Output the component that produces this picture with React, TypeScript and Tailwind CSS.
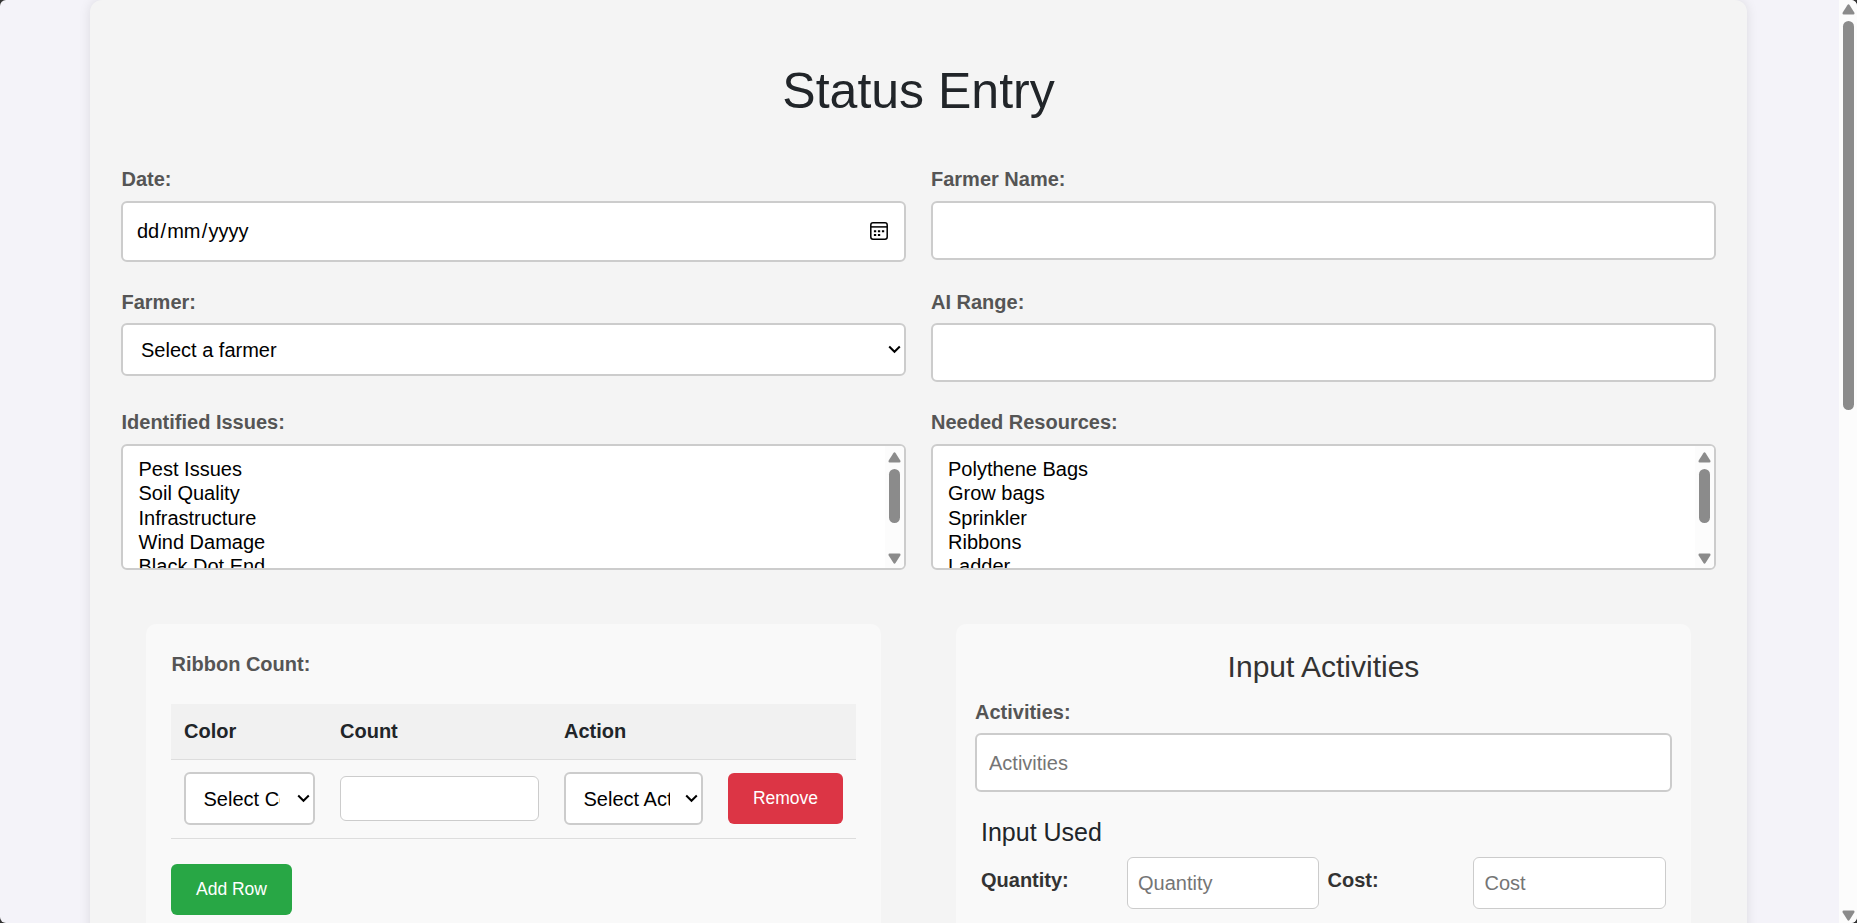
import type { ReactNode } from "react";

const field = "border-2 border-[#ccc] rounded-md bg-white text-[20px] text-black";

function Label({ children, inset = false }: { children: ReactNode; inset?: boolean }) {
  return (
    <label className={`${inset ? "pl-[0.5px]" : "pl-0"} block h-[30px] text-[20px] leading-[30px] font-bold text-[#555]`}>
      {children}
    </label>
  );
}

function Chevron() {
  return (
    <svg className="shrink-0" width="13" height="9" viewBox="0 0 13 9" fill="none" stroke="#000" strokeWidth="2">
      <path d="M1.2 1.5 6.5 6.8 11.8 1.5" />
    </svg>
  );
}

function Arrow({ down = false }: { down?: boolean }) {
  return (
    <svg className={down ? "shrink-0 rotate-180" : "shrink-0"} width="13" height="11" viewBox="0 0 13 11" fill="#8b8b8b">
      <path d="M5.3 1.2Q6.5-.6 7.7 1.2L12.3 8.6Q13 10.4 11.3 10.5H1.7Q0 10.4.7 8.6Z" />
    </svg>
  );
}

function ListBox({ items, inset = false }: { items: string[]; inset?: boolean }) {
  return (
    <div className={`${field} mt-[2px] flex h-[126px] overflow-hidden`}>
      <ul className={`${inset ? "pl-[15.5px]" : "pl-[15px]"} flex-1 pt-[12px]`}>
        {items.map((item) => (
          <li key={item} className="h-[24.3px] leading-[23px]">{item}</li>
        ))}
      </ul>
      <div className="flex w-[19px] flex-col items-center bg-[#fcfcfc] pt-[6px] pb-[4px]">
        <Arrow />
        <div className="mt-[6px] h-[54px] w-[11px] rounded-full bg-[#8b8b8b]" />
        <div className="flex-1" />
        <Arrow down />
      </div>
    </div>
  );
}

function MiniSelect({ text, textWidth }: { text: string; textWidth: string }) {
  return (
    <div className={`${field} flex h-[53px] items-center justify-between pr-[3px] pl-[17.5px]`}>
      <span className={`${textWidth} overflow-hidden whitespace-nowrap leading-[30px]`}>{text}</span>
      <Chevron />
    </div>
  );
}

export default function App() {
  return (
    <div className="bg-[#333]">
      <div className="flex h-[923px] w-[1857px] overflow-hidden rounded-[6px] bg-[#f4f3f9] font-['Liberation_Sans',Arial,sans-serif]">
        <div className="w-[1839px] shrink-0 pl-[90px]">
          <main className="h-[1000px] w-[1657px] rounded-xl bg-[#f4f4f4] px-[31px] pt-[61px] shadow-[0_0_12px_rgba(0,0,0,0.1)]">
            <h1 className="h-[60px] text-center text-[50px] leading-[60px] text-[#212529]">Status Entry</h1>

            <div className="mt-[43px] grid grid-cols-2 gap-x-[25px]">
              <div className="h-[123px]">
                <Label inset>Date:</Label>
                <div className={`${field} mt-[7px] flex h-[61px] items-center justify-between pr-4 pb-[2px] pl-[14px]`}>
                  <span className="flex gap-[1.2px]">
                    <span>dd</span>
                    <span>/</span>
                    <span>mm</span>
                    <span>/</span>
                    <span>yyyy</span>
                  </span>
                  <svg width="18" height="18" viewBox="0 0 18 18" fill="none" stroke="#000">
                    <rect x=".8" y=".8" width="16.4" height="16.4" rx="2.2" strokeWidth="1.5" />
                    <path d="M1 4.9h16" strokeWidth="1.5" />
                    <path d="M3.9 9.2h2.3M7.9 9.2h2.3M11.9 9.2h2.3M3.9 13h2.3M7.9 13h2.3" strokeWidth="2.1" />
                  </svg>
                </div>
              </div>
              <div>
                <Label>Farmer Name:</Label>
                <input className={`${field} mt-[7px] block h-[59px] w-full`} />
              </div>
              <div className="h-[120px]">
                <Label inset>Farmer:</Label>
                <div className={`${field} mt-[6px] flex h-[53px] items-center justify-between pr-[3px] pl-[18px]`}>
                  <span>Select a farmer</span>
                  <Chevron />
                </div>
              </div>
              <div>
                <Label>AI Range:</Label>
                <input className={`${field} mt-[6px] block h-[59px] w-full`} />
              </div>
              <div>
                <Label inset>Identified Issues:</Label>
                <div className="pt-[5px]">
                  <ListBox inset items={["Pest Issues", "Soil Quality", "Infrastructure", "Wind Damage", "Black Dot End"]} />
                </div>
              </div>
              <div>
                <Label>Needed Resources:</Label>
                <div className="pt-[5px]">
                  <ListBox items={["Polythene Bags", "Grow bags", "Sprinkler", "Ribbons", "Ladder"]} />
                </div>
              </div>
            </div>

            <div className="mt-[54px] grid grid-cols-2 gap-x-[75px] px-[25px]">
              <section className="h-[360px] rounded-[10px] bg-[#f9f9f9] px-[25px] pt-[25px]">
                <Label inset>Ribbon Count:</Label>
                <table className="mt-[25px] w-[685px] table-fixed border-collapse text-left text-[20px] text-[#212529]">
                  <colgroup>
                    <col className="w-[157px]" />
                    <col className="w-[224px]" />
                    <col className="w-[163px]" />
                    <col className="w-[141px]" />
                  </colgroup>
                  <thead>
                    <tr className="h-[55px] border-b border-[#ddd] bg-[#f1f1f1]">
                      <th className="px-[13px]">Color</th>
                      <th className="px-[12px]">Count</th>
                      <th className="px-[12px]">Action</th>
                      <th />
                    </tr>
                  </thead>
                  <tbody>
                    <tr className="h-[79px] border-b border-[#ddd]">
                      <td className="p-0 px-[13px]"><MiniSelect text="Select Color" textWidth="w-[76px]" /></td>
                      <td className="p-0 px-[12px]"><input className="block h-[45px] w-[199px] rounded-md border border-[#ccc] bg-white" /></td>
                      <td className="p-0 px-[12px]"><MiniSelect text="Select Action" textWidth="w-[86px]" /></td>
                      <td className="p-0 px-[13px]">
                        <button className="block h-[51px] w-full rounded-md bg-[#dc3545] text-[17.5px] text-white">Remove</button>
                      </td>
                    </tr>
                  </tbody>
                </table>
                <button className="mt-[25px] block h-[51px] w-[121px] rounded-md bg-[#28a745] text-[17.5px] text-white">Add Row</button>
              </section>

              <section className="h-[360px] rounded-[10px] bg-[#f9f9f9] px-[19px] pt-[25px]">
                <h2 className="h-[36px] text-center text-[30px] leading-[36px] text-[#333]">Input Activities</h2>
                <div className="mt-[12px]">
                  <Label>Activities:</Label>
                </div>
                <input placeholder="Activities" className={`${field} mt-[6px] block h-[59px] w-full px-3 pt-[2px] placeholder:text-[#757575]`} />
                <h3 className="mt-[25px] pl-[6px] text-[25px] leading-[30px] text-[#212529]">Input Used</h3>
                <div className="mt-[10px] flex pr-[6px] pl-[6px] text-[20px] text-[#333]">
                  <label className="w-[146px] pt-[8px] leading-[30px] font-bold">Quantity:</label>
                  <input placeholder="Quantity" className="h-[52px] w-[192px] rounded-md border border-[#ccc] bg-white px-[10px] placeholder:text-[#757575]" />
                  <label className="ml-[8px] w-[146px] pt-[8px] pl-[0.5px] leading-[30px] font-bold">Cost:</label>
                  <input placeholder="Cost" className="h-[52px] w-[193px] rounded-md border border-[#ccc] bg-white px-[10.5px] placeholder:text-[#757575]" />
                </div>
              </section>
            </div>
          </main>
        </div>
        <div className="flex w-[18px] shrink-0 flex-col items-center bg-[#fcfcfc] pt-[4px] pb-[2px]">
          <Arrow />
          <div className="mt-[6px] h-[389px] w-[11px] rounded-full bg-[#8b8b8b]" />
          <div className="flex-1" />
          <Arrow down />
        </div>
      </div>
    </div>
  );
}
